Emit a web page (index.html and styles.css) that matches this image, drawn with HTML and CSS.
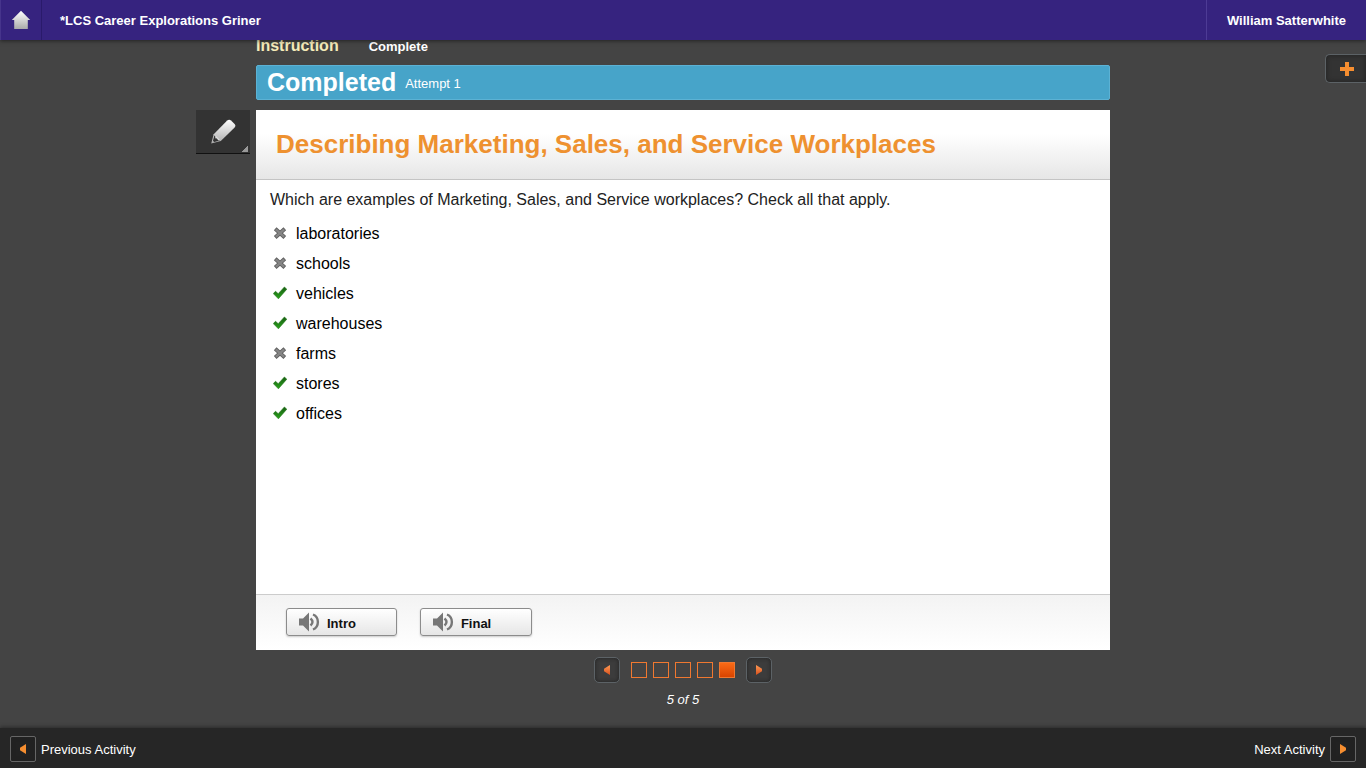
FILE: index.html
```
<!DOCTYPE html>
<html lang="en">
<head>
    <meta charset="UTF-8">
    <meta name="viewport" content="width=device-width, initial-scale=1.0">
    <title>Describing Marketing, Sales, and Service Workplaces</title>
    <link rel="stylesheet" href="styles.css">
</head>
<body>
    <!-- Symbols shared by the page -->
    <svg class="symbols" aria-hidden="true">
        <defs>
            <linearGradient id="light" x1="0" y1="0" x2="0" y2="1">
                <stop offset="0" stop-color="#ffffff"/>
                <stop offset="1" stop-color="#aaaaaa"/>
            </linearGradient>
            <linearGradient id="green" x1="0" y1="0" x2="0" y2="1">
                <stop offset="0" stop-color="#175c12"/>
                <stop offset="1" stop-color="#2ba31d"/>
            </linearGradient>
            <linearGradient id="orange" x1="0" y1="0" x2="0" y2="1">
                <stop offset="0" stop-color="#ff9a55"/>
                <stop offset="1" stop-color="#d8501c"/>
            </linearGradient>
        </defs>
        <symbol id="wrong" viewBox="0 0 14 14">
            <path d="M2.2 2.8L11.8 11.4M11.8 2.8L2.2 11.4" fill="none" stroke="#5e5e5e" stroke-width="4"/>
            <path d="M2.8 3.4L11.2 10.8M11.2 3.4L2.8 10.8" fill="none" stroke="#858585" stroke-width="2.4"/>
        </symbol>
        <symbol id="right" viewBox="0 0 14 14">
            <path d="M0.3 7.6L2.5 5.3L5.2 7.7L11.4 1L13.8 3.2L5.4 12.8Z" fill="url(#green)" stroke="#1c7414" stroke-width="0.6"/>
        </symbol>
        <symbol id="speaker" viewBox="0 0 22 20">
            <path d="M1 6.5H5L11 0.5V19.5L5 13.5H1Z" fill="#777"/>
            <path d="M12.5 6.5Q16.5 10 12.5 13.5" fill="none" stroke="#777" stroke-width="2.4"/>
            <path d="M15 2.5C21.5 5 21.5 15 15 17.5" fill="none" stroke="#777" stroke-width="2.4"/>
        </symbol>
    </svg>

    <!-- Top bar -->
    <header class="top-bar">
        <a class="home" href="#" aria-label="Home">
            <svg width="20" height="20" viewBox="0 0 20 20"><path d="M10 0.8L19.2 10H16.8V19H3.2V10H0.8Z" fill="url(#light)"/></svg>
        </a>
        <a class="course" href="#">*LCS Career Explorations Griner</a>
        <a class="user" href="#">William Satterwhite</a>
    </header>

    <main class="main">
        <button class="add-tab" type="button" aria-label="Open tools">
            <svg width="14" height="14" viewBox="0 0 14 14"><path d="M5 0H9V5H14V9H9V14H5V9H0V5H5Z" fill="#f68e30"/></svg>
        </button>

        <div class="activity">
            <div class="status">
                <span class="stage">Instruction</span>
                <span class="state">Complete</span>
            </div>

            <div class="banner">
                <strong>Completed</strong>
                <span>Attempt 1</span>
            </div>

            <section class="card">
                <button class="pencil" type="button" aria-label="Highlighter">
                    <svg width="26" height="26" viewBox="0 0 26 26">
                        <path d="M1.2 24.6L3.7 15.2L17.2 1.6Q19 -0.2 21 1.4L24.6 5Q26.2 7 24.4 8.8L10.8 22Z" fill="url(#light)"/>
                        <path d="M4.4 16.4L9.6 21.6L4.2 23L3 21.8Z" fill="#333"/>
                        <path d="M5.6 16.4L9.8 20.8L8.2 21.4L7 19.6L5.2 19.2Z" fill="#ddd"/>
                    </svg>
                </button>
                <div class="card-head">
                    <h1>Describing Marketing, Sales, and Service Workplaces</h1>
                </div>
                <div class="card-body">
                    <p class="question">Which are examples of Marketing, Sales, and Service workplaces? Check all that apply.</p>
                    <ul class="answers">
                        <li><svg role="img" aria-label="Not correct"><use href="#wrong"/></svg>laboratories</li>
                        <li><svg role="img" aria-label="Not correct"><use href="#wrong"/></svg>schools</li>
                        <li><svg role="img" aria-label="Correct"><use href="#right"/></svg>vehicles</li>
                        <li><svg role="img" aria-label="Correct"><use href="#right"/></svg>warehouses</li>
                        <li><svg role="img" aria-label="Not correct"><use href="#wrong"/></svg>farms</li>
                        <li><svg role="img" aria-label="Correct"><use href="#right"/></svg>stores</li>
                        <li><svg role="img" aria-label="Correct"><use href="#right"/></svg>offices</li>
                    </ul>
                </div>
                <div class="card-foot">
                    <button class="audio" type="button"><svg><use href="#speaker"/></svg>Intro</button>
                    <button class="audio" type="button"><svg><use href="#speaker"/></svg>Final</button>
                </div>
            </section>

            <nav class="pager" aria-label="Questions">
                <button class="arrow" type="button" aria-label="Previous question">
                    <svg width="8" height="10" viewBox="0 0 8 10"><path d="M7 0V10L1 6.2V3.8Z" fill="url(#orange)"/></svg>
                </button>
                <div class="squares">
                    <a href="#" aria-label="Question 1"></a>
                    <a href="#" aria-label="Question 2"></a>
                    <a href="#" aria-label="Question 3"></a>
                    <a href="#" aria-label="Question 4"></a>
                    <a class="current" href="#" aria-label="Question 5"></a>
                </div>
                <button class="arrow" type="button" aria-label="Next question">
                    <svg width="8" height="10" viewBox="0 0 8 10"><path d="M1 0V10L7 6.2V3.8Z" fill="url(#orange)"/></svg>
                </button>
            </nav>
            <p class="count">5 of 5</p>
        </div>
    </main>

    <!-- Bottom bar -->
    <footer class="bottom-bar">
        <a href="#">
            <span class="step"><svg width="8" height="10" viewBox="0 0 8 10"><path d="M7 0V10L1 6.2V3.8Z" fill="#f68e30"/></svg></span>
            Previous Activity
        </a>
        <a href="#">
            Next Activity
            <span class="step"><svg width="8" height="10" viewBox="0 0 8 10"><path d="M1 0V10L7 6.2V3.8Z" fill="#f68e30"/></svg></span>
        </a>
    </footer>
</body>
</html>
```

FILE: styles.css
```
* {
    margin: 0;
    padding: 0;
    box-sizing: border-box;
}

body {
    display: flex;
    flex-direction: column;
    min-height: 100vh;
    background: #444;
    color: #fff;
    font-family: "Liberation Sans", Arial, sans-serif;
    font-size: 13px;
    line-height: 20px;
}

a {
    color: inherit;
    text-decoration: none;
}

button {
    font: inherit;
    cursor: pointer;
}

svg {
    display: block;
    flex: none;
}

.symbols {
    position: absolute;
    width: 0;
    height: 0;
}

/* Top bar */
.top-bar {
    position: relative;
    z-index: 1;
    display: flex;
    height: 40px;
    background: #36237f;
    box-shadow: 0 1px 4px rgba(0, 0, 0, 0.5);
    font-weight: bold;
}

.home {
    display: flex;
    align-items: center;
    justify-content: center;
    width: 42px;
    border-left: 1px solid #46348c;
    border-right: 1px solid #2a1a6b;
}

.course {
    flex: 1;
    padding: 11px 18px 9px;
}

.user {
    padding: 11px 20px 9px;
    border-left: 1px solid #4d3b95;
}

/* Activity */
.main {
    position: relative;
    flex: 1;
    padding: 0 60px;
}

.add-tab {
    position: absolute;
    top: 14px;
    right: 0;
    display: flex;
    align-items: center;
    width: 41px;
    height: 29px;
    padding-left: 14px;
    border: 1px solid #5c6266;
    border-right: 0;
    border-radius: 5px 0 0 5px;
    background: #333;
    box-shadow: inset 0 0 5px #222;
}

.activity {
    max-width: 854px;
    margin: -4px auto 0;
}

.status {
    display: flex;
    gap: 30px;
    margin-bottom: 7px;
    font-weight: bold;
    line-height: 22px;
}

.stage {
    color: #f5ebb9;
    font-size: 16px;
    line-height: 20px;
}

.banner {
    display: flex;
    align-items: center;
    gap: 9px;
    height: 35px;
    margin-bottom: 10px;
    padding: 0 10px;
    border: 1px solid #5cb2d4;
    border-radius: 2px;
    background: #47a4c9;
}

.banner strong {
    padding-bottom: 2px;
    font-size: 25px;
}

.banner span {
    padding-top: 2px;
}

.card {
    position: relative;
    display: flex;
    flex-direction: column;
    min-height: 540px;
    background: #fff;
    color: #000;
}

.pencil {
    position: absolute;
    top: 0;
    left: -60px;
    display: flex;
    align-items: center;
    justify-content: center;
    width: 54px;
    height: 44px;
    border: 0;
    border-bottom: 1px solid #111;
    background: linear-gradient(135deg, transparent 50%, #999 50%) right 2px bottom 1px / 6px 6px no-repeat #333;
}

.card-head {
    padding: 19px 20px 20px;
    border-bottom: 1px solid #c4c4c4;
    background: linear-gradient(#fff 35%, #e6e6e6);
}

.card-head h1 {
    color: #ee9130;
    font-size: 26px;
    line-height: 30px;
}

.card-body {
    flex: 1;
    padding: 10px 14px;
    font-size: 16px;
}

.question {
    margin-bottom: 9px;
    color: #222;
}

.answers {
    list-style: none;
}

.answers li {
    display: flex;
    align-items: center;
    gap: 9px;
    padding-left: 3px;
    line-height: 30px;
}

.answers svg {
    width: 14px;
    height: 14px;
    margin-bottom: 2px;
}

.card-foot {
    display: flex;
    gap: 23px;
    padding: 13px 30px 14px;
    border-top: 1px solid #ccc;
    background: linear-gradient(#f3f3f3, #fff);
}

.audio {
    display: flex;
    align-items: center;
    gap: 7px;
    height: 28px;
    padding: 4px 40px 0 11px;
    border: 1px solid #8c8c8c;
    border-radius: 3px;
    background: linear-gradient(#fff, #e6e6e6);
    box-shadow: 0 1px 2px rgba(0, 0, 0, 0.2);
    color: #111;
    font-weight: bold;
}

.audio svg {
    width: 22px;
    height: 20px;
    margin-bottom: 4px;
}

/* Question pager */
.pager {
    display: flex;
    align-items: center;
    justify-content: center;
    gap: 11px;
    margin-top: 7px;
}

.arrow,
.step {
    display: flex;
    align-items: center;
    justify-content: center;
    width: 26px;
    height: 26px;
    border: 1px solid #5c6266;
    border-radius: 5px;
    background: #3c3c3c;
    box-shadow: inset 0 0 4px #222;
}

.squares {
    display: flex;
    gap: 6px;
}

.squares a {
    width: 16px;
    height: 16px;
    border: 1px solid #f07830;
}

.squares .current {
    background: linear-gradient(#f96a16, #d94400);
}

.count {
    margin-top: 7px;
    font-style: italic;
    text-align: center;
}

/* Bottom bar */
.bottom-bar {
    display: flex;
    align-items: center;
    justify-content: space-between;
    height: 40px;
    padding: 4px 10px 0;
    background: #262626;
    box-shadow: 0 -1px 4px rgba(0, 0, 0, 0.4);
}

.bottom-bar a {
    display: flex;
    gap: 5px;
    line-height: 28px;
}

.bottom-bar .step {
    border-color: #666;
    border-radius: 2px;
    background: #222;
}
```
